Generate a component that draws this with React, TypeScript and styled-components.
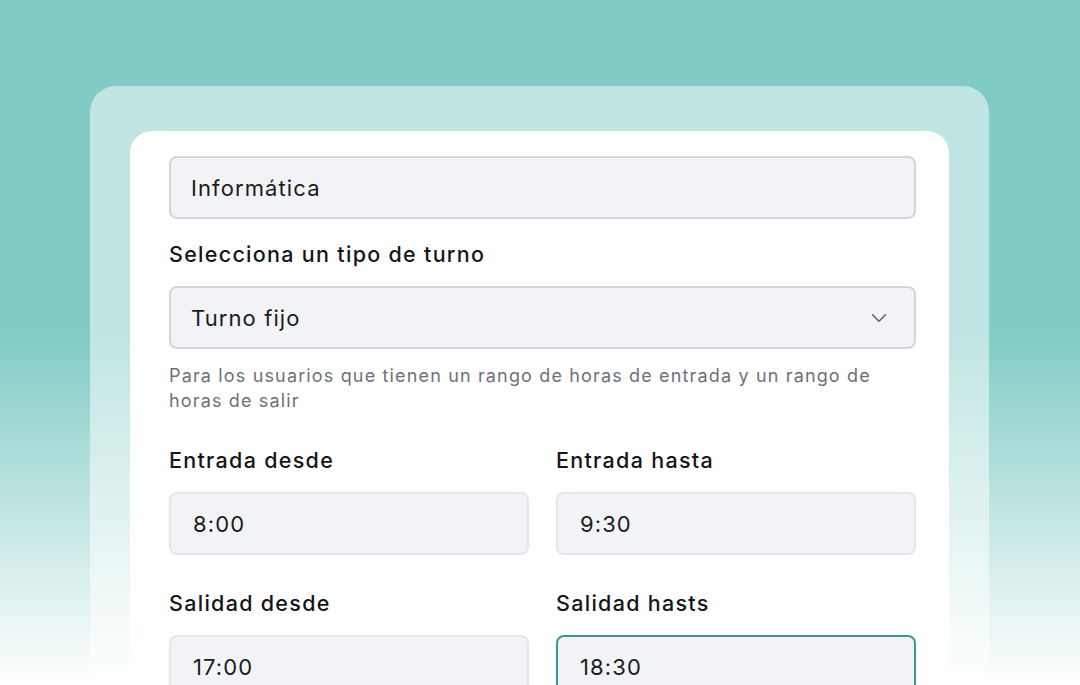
import React from 'react';
import styled, { createGlobalStyle } from 'styled-components';
import { ChevronDown } from 'lucide-react';

const GlobalStyle = createGlobalStyle`
  html, body {
    margin: 0;
    padding: 0;
  }
  body {
    font-family: Inter, "Noto Sans", sans-serif;
    color: #1c1f24;
  }
`

const Page = styled.div`
  width: 1080px;
  height: 685px;
  overflow: hidden;
  box-sizing: border-box;
  padding: 86px 91px 0 90px;
  background: linear-gradient(180deg, #80cbc4 0px, #80cbc4 330px, #ffffff 685px);
`

const OuterCard = styled.div`
  background: rgba(255, 255, 255, 0.5);
  border-radius: 26px 26px 0 0;
  padding: 45px 40px 0 40px;
  height: 700px;
`

const InnerCard = styled.div`
  background: #ffffff;
  border-radius: 22px 22px 0 0;
  padding: 25px 33px 0 39px;
  height: 700px;
  display: flex;
  flex-direction: column;
`

const Field = styled.div`
  display: flex;
  flex-direction: column;
  gap: 20px;
`

const Label = styled.label`
  font-size: 21.5px;
  font-weight: 500;
  line-height: 24px;
  letter-spacing: 0.06em;
  color: #141619;
`

const Box = styled.div<{ $tone?: 'gray' | 'light' | 'focus' }>`
  height: 63px;
  box-sizing: border-box;
  display: flex;
  align-items: center;
  justify-content: space-between;
  padding: 0 22px 0 ${p => (p.$tone === 'gray' ? '20px' : '22px')};
  background: #f2f3f6;
  border-radius: 8px;
  border: ${p =>
    p.$tone === 'focus'
      ? '2.5px solid #3e988d'
      : p.$tone === 'light'
      ? '2px solid #e2e7ef'
      : '2.5px solid #d2d5da'};
  font-size: 22px;
  letter-spacing: 0.05em;
  color: #1a1c20;
  svg {
    color: #62666e;
  }
`

const Help = styled.p`
  margin: 14px 0 0 0;
  font-size: 18px;
  line-height: 25px;
  letter-spacing: 0.064em;
  color: #6e7178;
  max-width: 718px;
`

const Row = styled.div`
  display: grid;
  grid-template-columns: 1fr 1fr;
  column-gap: 27px;
`

const Section = styled.div<{ $top: number }>`
  margin-top: ${p => p.$top}px;
`

export default function App() {
  return (
    <>
      <GlobalStyle />
      <Page>
        <OuterCard>
          <InnerCard>
            <Box $tone="gray">Informática</Box>

            <Section $top={23}>
              <Field>
                <Label>Selecciona un tipo de turno</Label>
                <Box $tone="gray">
                  Turno fijo
                  <ChevronDown size={26} strokeWidth={1.5} />
                </Box>
              </Field>
            </Section>

            <Help>
              Para los usuarios que tienen un rango de horas de entrada y un rango de
              horas de salir
            </Help>

            <Section $top={35}>
              <Row>
                <Field>
                  <Label>Entrada desde</Label>
                  <Box $tone="light">8:00</Box>
                </Field>
                <Field>
                  <Label>Entrada hasta</Label>
                  <Box $tone="light">9:30</Box>
                </Field>
              </Row>
            </Section>

            <Section $top={36}>
              <Row>
                <Field>
                  <Label>Salidad desde</Label>
                  <Box $tone="light">17:00</Box>
                </Field>
                <Field>
                  <Label>Salidad hasts</Label>
                  <Box $tone="focus">18:30</Box>
                </Field>
              </Row>
            </Section>
          </InnerCard>
        </OuterCard>
      </Page>
    </>
  );
}
